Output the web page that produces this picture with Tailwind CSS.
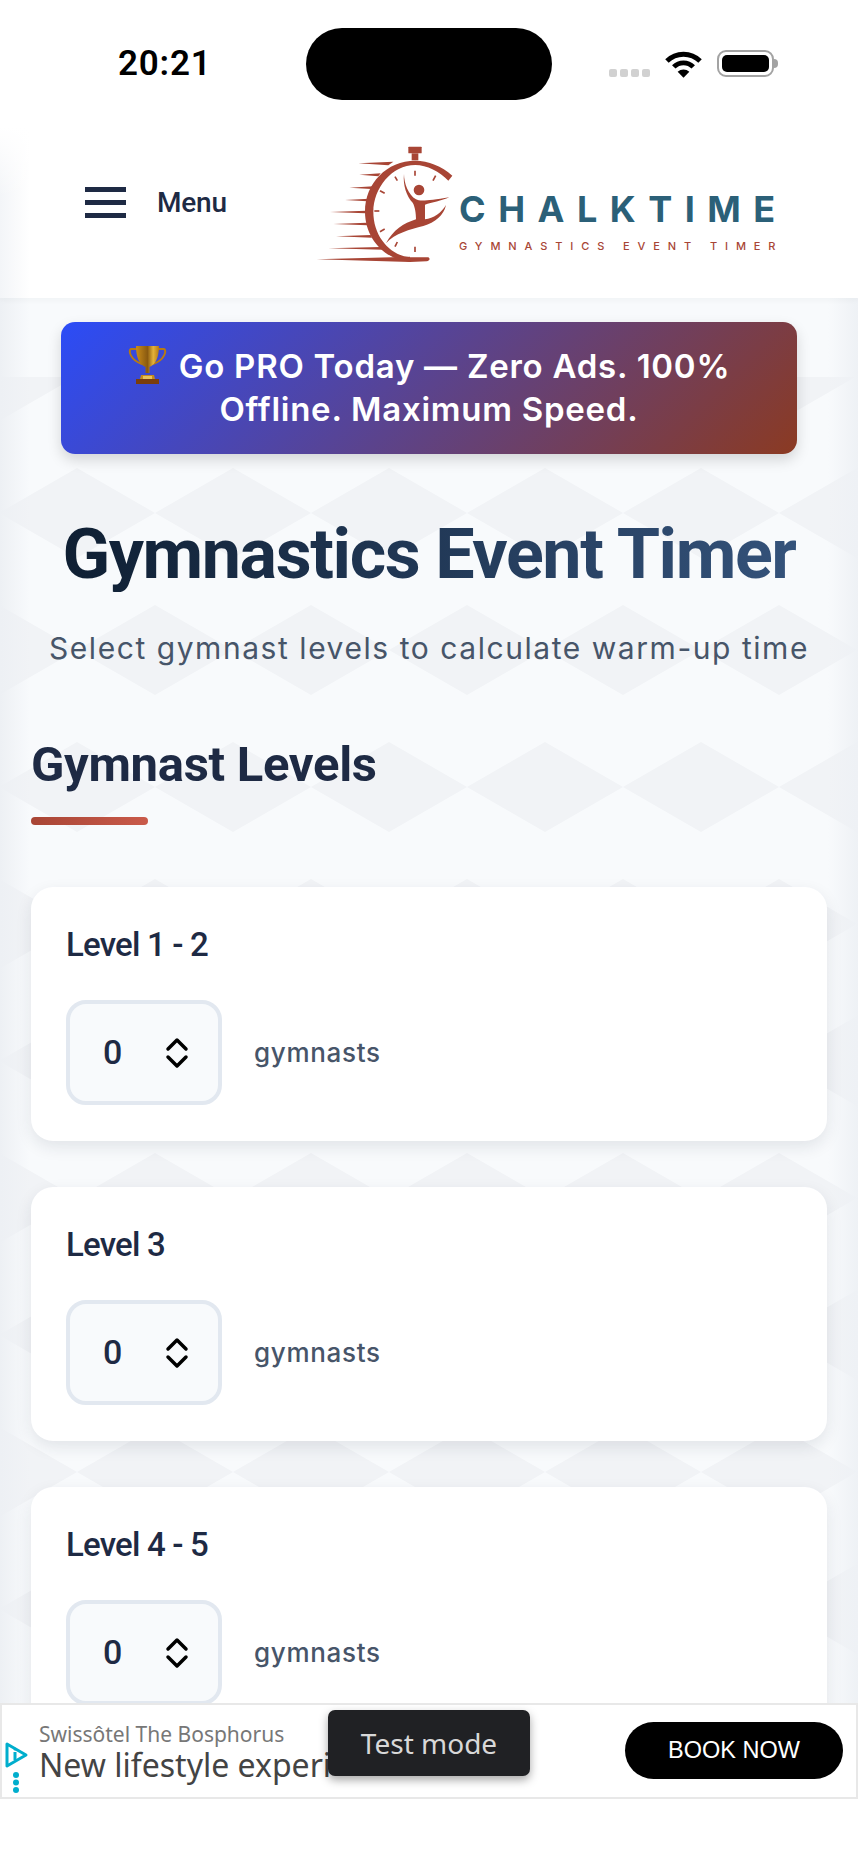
<!DOCTYPE html>
<html lang="en">
<head>
    <meta charset="UTF-8">
    <meta name="viewport" content="width=device-width, initial-scale=1.0">
    <title>ChalkTime - Gymnastics Event Timer</title>
    <script src="https://cdn.jsdelivr.net/npm/@tailwindcss/browser@4"></script>
</head>
<body class="bg-white">
<div class="relative w-[858px] h-[1864px] overflow-hidden bg-[#f8fafc] font-['Inter',sans-serif]">

    <!-- diamond background -->
    <svg class="absolute left-0 top-[377px]" width="858" height="1330">
        <defs>
            <pattern id="diamonds" x="-1" y="-46" width="156" height="274" patternUnits="userSpaceOnUse">
                <polygon points="78,137 156,182 78,227 0,182" fill="#f1f3f6" transform="translate(78 -137)"/>
                <polygon points="78,137 156,182 78,227 0,182" fill="#f1f3f6" transform="translate(-78 -137)"/>
                <polygon points="78,137 156,182 78,227 0,182" fill="#f1f3f6"/>
            </pattern>
        </defs>
        <rect width="858" height="1330" fill="url(#diamonds)"/>
    </svg>
    <div class="absolute left-0 top-[298px] bottom-0 w-[30px] bg-[linear-gradient(90deg,#edf0f4,#edf0f400)]"></div>
    <div class="absolute right-0 top-[298px] bottom-0 w-[30px] bg-[linear-gradient(270deg,#eef1f5,#eef1f500)]"></div>

    <!-- status bar + header -->
    <div class="relative h-[298px] flex flex-col bg-[linear-gradient(90deg,#f3f5f8,#ffffff_30px)] shadow-[0_2px_6px_rgba(30,41,59,0.04)]">
        <div class="absolute left-0 right-0 top-0 h-[127px] bg-white"></div>
        <div class="absolute left-0 top-[127px] w-[30px] h-[70px] bg-[linear-gradient(180deg,#ffffff,#ffffff00)]"></div>
        <div class="relative h-[127px] flex items-center">
            <div class="w-[306px] pl-[118px] text-[35px] tracking-[0.8px] font-semibold text-black font-['Roboto',sans-serif] leading-none">20:21</div>
            <div class="w-[246px] h-[72px] rounded-[36px] bg-black"></div>
            <div class="flex items-center ml-[57px]">
                <div class="flex gap-[3px] mt-[18px]">
                    <span class="w-[8px] h-[8px] rounded-[2px] bg-[#d1d1d1]"></span>
                    <span class="w-[8px] h-[8px] rounded-[2px] bg-[#d1d1d1]"></span>
                    <span class="w-[8px] h-[8px] rounded-[2px] bg-[#d1d1d1]"></span>
                    <span class="w-[8px] h-[8px] rounded-[2px] bg-[#d1d1d1]"></span>
                </div>
                <svg class="ml-[15px]" width="37" height="28" viewBox="0 0 38 28" fill="none" stroke="#000" stroke-width="5">
                    <path d="M2 11 A24 24 0 0 1 36 11"/>
                    <path d="M9 17 A14 14 0 0 1 29 17"/>
                    <path d="M13 22 L19 28 L25 22 A9 9 0 0 0 13 22Z" fill="#000" stroke="none"/>
                </svg>
                <div class="ml-[15px] w-[57px] h-[27px] rounded-[9px] border-[2.500px] border-[#a3a3a3] p-[3px]">
                    <div class="w-full h-full rounded-[5px] bg-black"></div>
                </div>
                <div class="w-[4px] h-[9px] rounded-r bg-[#a3a3a3]"></div>
            </div>
        </div>
        <div class="relative flex-1 flex items-start">
            <div class="w-[310px] shrink-0 flex items-center mt-[60px] pl-[85px]">
                <div class="flex flex-col gap-[8px]">
                    <span class="block w-[41px] h-[5px] bg-[#1e2a44]"></span>
                    <span class="block w-[41px] h-[5px] bg-[#1e2a44]"></span>
                    <span class="block w-[41px] h-[5px] bg-[#1e2a44]"></span>
                </div>
                <span class="ml-[31px] text-[28px] font-medium tracking-[-0.2px] text-[#1e2a44] font-['Roboto',sans-serif] leading-none">Menu</span>
            </div>
            <div class="flex items-start mt-[13px]">
                <svg width="160" height="130" viewBox="0 0 480 390" fill="#a84535" class="shrink-0">
                    <rect x="295" y="20" width="40" height="20" rx="2"/>
                    <rect x="305" y="40" width="20" height="21"/>
                    <path d="M427 107 C395 78 355 62 316 62 C230 62 165 130 165 215 C165 285 210 340 265 358 L300 366 L350 364 C360 362 361 355 355 352 L300 352 C240 345 190 290 190 215 C190 145 245 75 316 75 C350 75 390 95 415 122Z"/>
                    <path d="M145 70 L250 65 L235 76Z"/>
                    <path d="M148 104 L212 100 L205 109Z"/>
                    <path d="M118 143 L190 139 L184 147Z"/>
                    <path d="M105 180 L178 176 L172 184Z"/>
                    <path d="M60 216 L168 212 L166 220Z"/>
                    <path d="M70 252 L170 248 L172 256Z"/>
                    <path d="M78 289 L182 285 L186 293Z"/>
                    <path d="M55 325 L212 321 L220 329Z"/>
                    <path d="M20 358 L300 350 L300 366Z"/>
                    <g stroke="#a84535" stroke-width="5" fill="none">
                        <path d="M315 92 V107"/>
                        <path d="M315 320 V336"/>
                        <path d="M377 107 L369 122"/>
                        <path d="M255 110 L262 122"/>
                        <path d="M210 152 L224 160"/>
                        <path d="M193 213 H208"/>
                        <path d="M210 275 L224 267"/>
                        <path d="M262 306 L255 320"/>
                    </g>
                    <circle cx="327" cy="150" r="16"/>
                    <path d="M282 102 C282 130 295 165 318 178 C330 185 355 182 418 172 C395 182 365 188 345 194 L345 238 C370 235 395 218 408 195 C402 225 375 248 340 258 C300 268 255 280 228 310 C250 270 280 250 318 238 C318 220 315 200 308 188 C290 170 278 135 282 102Z"/>
                </svg>
                <div class="ml-[-11px] mt-[56px] flex flex-col">
                    <span class="text-[36px] leading-[26px] font-bold text-[#2b6078] tracking-[12.500px] whitespace-nowrap">CHALKTIME</span>
                    <span class="mt-[20px] text-[11px] leading-[8px] font-medium text-[#a84535] tracking-[7.900px] whitespace-nowrap">GYMNASTICS EVENT TIMER</span>
                </div>
            </div>
        </div>
    </div>

    <main class="relative px-[31px]">
        <div class="mt-[24px] mx-[30px] h-[132px] rounded-[14px] bg-[linear-gradient(135deg,#2b4cf7,#8b3a22)] shadow-[0_6px_14px_rgba(0,0,0,0.15)] flex items-center justify-center text-center text-white font-semibold text-[33px] tracking-[0.75px] leading-[43px]">
            <div class="whitespace-nowrap">
                <svg class="inline-block align-[-7px] mr-[12px]" width="39" height="40" viewBox="0 0 39 40" fill="none">
                    <defs>
                        <linearGradient id="cup" x1="0" x2="1" y1="0" y2="0">
                            <stop offset="0" stop-color="#c98c1a"/>
                            <stop offset="0.5" stop-color="#8a5a10"/>
                            <stop offset="0.75" stop-color="#e4b23a"/>
                            <stop offset="1" stop-color="#b47a14"/>
                        </linearGradient>
                    </defs>
                    <path d="M9 4 H3 C0 5 2 15 14 19 M30 4 H36 C39 5 37 15 25 19" stroke="#b87a12" stroke-width="2"/>
                    <path d="M8 1 H31 C31 13 27 20 21.500 22 V28 H17.500 V22 C12 20 8 13 8 1Z" fill="url(#cup)"/>
                    <path d="M13 30 H26 L27 34 H12Z" fill="#c48a1e"/>
                    <rect x="8" y="34" width="23" height="5" fill="#7a3d0c"/>
                    <rect x="15" y="31" width="9" height="3" fill="#e8c25a"/>
                </svg>Go PRO Today — Zero Ads. 100%<br>Offline. Maximum Speed.
            </div>
        </div>

        <h1 class="mt-[62px] text-center text-[70px] tracking-[-1.4px] leading-[76px] font-bold whitespace-nowrap font-['Roboto',sans-serif] bg-[linear-gradient(90deg,#0f1f33,#34527a)] bg-clip-text text-transparent w-fit mx-auto">Gymnastics Event Timer</h1>
        <p class="mt-[38px] text-center text-[30px] tracking-[1.55px] leading-[36px] text-[#475569] whitespace-nowrap">Select gymnast levels to calculate warm-up time</p>

        <h2 class="mt-[71px] text-[49px] tracking-[-0.3px] leading-[56px] font-bold text-[#1e2a44] font-['Roboto',sans-serif]">Gymnast Levels</h2>
        <div class="mt-[24px] w-[117px] h-[8px] rounded-full bg-[linear-gradient(90deg,#a84535,#c95a4a)]"></div>

        <div class="mt-[62px] flex flex-col gap-[46px]">
            <div class="h-[254px] rounded-[22px] bg-white shadow-[0_6px_16px_rgba(30,41,59,0.1)] pl-[35px] pt-[40px]">
                <div class="text-[33px] tracking-[-0.8px] leading-[36px] font-medium text-[#1e2a44] font-['Roboto',sans-serif]">Level 1 - 2</div>
                <div class="mt-[37px] flex items-center">
                    <div class="w-[156px] h-[105px] rounded-[20px] border-[4px] border-[#e2e8f0] bg-[#f8fafc] flex items-center pl-[33px]">
                        <span class="w-[20px] text-[34px] font-medium text-[#1e2a44] font-['Roboto',sans-serif]">0</span>
                        <svg class="ml-[42px]" width="24" height="32" viewBox="0 0 24 32" fill="none" stroke="#000" stroke-width="3.5" stroke-linecap="round" stroke-linejoin="round"><path d="M3 12 L12 3 L21 12"/><path d="M3 20 L12 29 L21 20"/></svg>
                    </div>
                    <span class="ml-[32px] text-[26px] tracking-[0.7px] font-medium text-[#475569]">gymnasts</span>
                </div>
            </div>
            <div class="h-[254px] rounded-[22px] bg-white shadow-[0_6px_16px_rgba(30,41,59,0.1)] pl-[35px] pt-[40px]">
                <div class="text-[33px] tracking-[-0.8px] leading-[36px] font-medium text-[#1e2a44] font-['Roboto',sans-serif]">Level 3</div>
                <div class="mt-[37px] flex items-center">
                    <div class="w-[156px] h-[105px] rounded-[20px] border-[4px] border-[#e2e8f0] bg-[#f8fafc] flex items-center pl-[33px]">
                        <span class="w-[20px] text-[34px] font-medium text-[#1e2a44] font-['Roboto',sans-serif]">0</span>
                        <svg class="ml-[42px]" width="24" height="32" viewBox="0 0 24 32" fill="none" stroke="#000" stroke-width="3.5" stroke-linecap="round" stroke-linejoin="round"><path d="M3 12 L12 3 L21 12"/><path d="M3 20 L12 29 L21 20"/></svg>
                    </div>
                    <span class="ml-[32px] text-[26px] tracking-[0.7px] font-medium text-[#475569]">gymnasts</span>
                </div>
            </div>
            <div class="h-[254px] rounded-[22px] bg-white shadow-[0_6px_16px_rgba(30,41,59,0.1)] pl-[35px] pt-[40px]">
                <div class="text-[33px] tracking-[-0.8px] leading-[36px] font-medium text-[#1e2a44] font-['Roboto',sans-serif]">Level 4 - 5</div>
                <div class="mt-[37px] flex items-center">
                    <div class="w-[156px] h-[105px] rounded-[20px] border-[4px] border-[#e2e8f0] bg-[#f8fafc] flex items-center pl-[33px]">
                        <span class="w-[20px] text-[34px] font-medium text-[#1e2a44] font-['Roboto',sans-serif]">0</span>
                        <svg class="ml-[42px]" width="24" height="32" viewBox="0 0 24 32" fill="none" stroke="#000" stroke-width="3.5" stroke-linecap="round" stroke-linejoin="round"><path d="M3 12 L12 3 L21 12"/><path d="M3 20 L12 29 L21 20"/></svg>
                    </div>
                    <span class="ml-[32px] text-[26px] tracking-[0.7px] font-medium text-[#475569]">gymnasts</span>
                </div>
            </div>
        </div>
    </main>

    <!-- white area under the ad -->
    <div class="absolute left-0 right-0 top-[1703px] bottom-0 bg-white"></div>

    <!-- ad banner -->
    <div class="absolute left-0 right-0 top-[1703px] h-[96px] bg-white border-[2px] border-[#e8e8e8] font-['Noto_Sans',sans-serif]">
        <div class="absolute left-[37px] top-[15px] text-[21px] leading-[28px] text-[#777]">Swissôtel The Bosphorus</div>
        <div class="absolute left-[37px] top-[43px] text-[32px] leading-[34px] text-[#444] whitespace-nowrap">New lifestyle experi</div>
        <svg class="absolute left-[3px] top-[36px]" width="24" height="58" viewBox="0 0 24 58" fill="none">
            <path d="M2 3 L21 14 L2 25Z" stroke="#00aecd" stroke-width="3" stroke-linejoin="round"/>
            <rect x="8.500" y="11" width="3" height="8" fill="#00aecd"/>
            <circle cx="10" cy="8" r="1.500" fill="#00aecd"/>
            <circle cx="11" cy="34" r="3" fill="#00aecd"/>
            <circle cx="11" cy="41.500" r="3" fill="#00aecd"/>
            <circle cx="11" cy="49" r="3" fill="#00aecd"/>
        </svg>
        <div class="absolute left-[623px] top-[17px] w-[218px] h-[57px] rounded-full bg-black flex items-center justify-center text-[23.500px] text-white font-['Liberation_Sans',sans-serif]">BOOK NOW</div>
    </div>
    <div class="absolute left-[328px] top-[1710px] w-[202px] h-[66px] rounded-[7px] bg-[#202124] shadow-[0_4px_10px_rgba(0,0,0,0.35)] flex items-center justify-center text-[28px] text-[#d8d8d8] font-['Noto_Sans',sans-serif]">Test mode</div>
</div>
</body>
</html>
